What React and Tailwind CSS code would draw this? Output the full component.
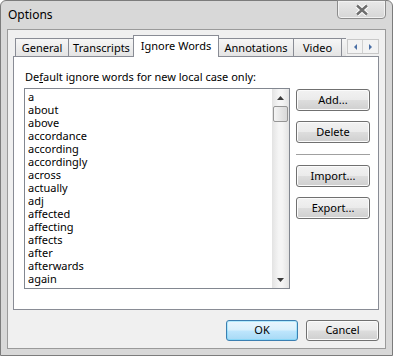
import React from "react";

// Windows 7 basic look for the Options dialog
const FONT = "font-['Noto_Sans',sans-serif]";
const BTN =
  "flex items-center justify-center rounded-[3px] border border-[#707070] bg-[linear-gradient(to_bottom,#f2f2f2_0%,#ebebeb_48%,#dddddd_52%,#cfcfcf_100%)] shadow-[inset_0_0_0_1px_#fbfbfb] text-[11px] text-black";

const WORDS = [
  "a",
  "about",
  "above",
  "accordance",
  "according",
  "accordingly",
  "across",
  "actually",
  "adj",
  "affected",
  "affecting",
  "affects",
  "after",
  "afterwards",
  "again",
];

const TABS = [
  { name: "General", w: "w-[53px]" },
  { name: "Transcripts", w: "w-[66px]" },
  { name: "Ignore Words", w: "w-[86px]", active: true },
  { name: "Annotations", w: "w-[75px]" },
  { name: "Video", w: "w-[48px]" },
];

const CloseGlyph = () => (
  <svg width="14" height="12" viewBox="0 0 14 12">
    <path d="M2 1.5 L12 10.5 M12 1.5 L2 10.5" stroke="#ffffff" strokeWidth="4.5" />
    <path d="M2 1.5 L12 10.5 M12 1.5 L2 10.5" stroke="#6e6e6e" strokeWidth="2.4" />
  </svg>
);

const Tri = ({ dir, color = "#000" }) => {
  const pts = {
    up: "0,4 3.5,0 7,4",
    down: "0,0 3.5,4 7,0",
    left: "3,0 0,3 3,6",
    right: "0,0 3,3 0,6",
  }[dir];
  const size = dir === "up" || dir === "down" ? [7, 4] : [3, 6];
  return (
    <svg width={size[0]} height={size[1]} viewBox={`0 0 ${size[0]} ${size[1]}`}>
      <polygon points={pts} fill={color} />
    </svg>
  );
};

const Tab = ({ tab }) =>
  tab.active ? (
    <div
      className={`${tab.w} -mx-px h-[22px] -mb-px relative z-10 border border-b-0 border-[#898c95] bg-white flex items-start justify-center pt-[2px] text-[11px] leading-[15px]`}
    >
      {tab.name}
    </div>
  ) : (
    <div
      className={`${tab.w} h-[18px] border border-b-0 border-r-0 border-[#898c95] bg-[linear-gradient(to_bottom,#f6f6f6,#e4e4e4)] flex items-center justify-center text-[11px] leading-[15px]`}
    >
      {tab.name}
    </div>
  );

export default function App() {
  return (
    <div
      className={`${FONT} w-[393px] h-[356px] bg-[#d8d8d8] border border-[#7c7c7c] rounded-t-[6px] flex flex-col text-black`}
    >
      {/* title bar */}
      <div className="h-[28px] flex items-start justify-between">
        <span className="ml-[7px] mt-[6px] text-[12px] leading-[16px]">Options</span>
        <div className="mr-[6px] -mt-px w-[49px] h-[19px] rounded-b-[4px] border border-[#8c8c8c] bg-[linear-gradient(to_bottom,#e9e9e9,#d6d6d6)] shadow-[inset_0_0_0_1px_#f2f2f2] flex items-center justify-center">
          <CloseGlyph />
        </div>
      </div>

      {/* client area */}
      <div className="mx-[6px] h-[320px] bg-[#f0f0f0] border border-[#9a9a9a] flex flex-col px-[5px] pt-[5px]">
        {/* tab strip */}
        <div className="h-[21px] flex items-end pl-[2px]">
          {TABS.map((t) => (
            <Tab key={t.name} tab={t} />
          ))}
          <div className="w-[5px] h-[18px] border-l border-t border-[#898c95] bg-[linear-gradient(to_bottom,#f6f6f6,#e4e4e4)]" />
          <div className="ml-px mb-[2px] flex h-[15px] border border-[#c8c8c8] bg-[#f3f3f3]">
            <div className="w-[15px] flex items-center justify-center border-r border-[#d0d0d0]">
              <Tri dir="left" color="#4a6fa5" />
            </div>
            <div className="w-[15px] flex items-center justify-center">
              <Tri dir="right" color="#4a6fa5" />
            </div>
          </div>
        </div>

        {/* tab panel */}
        <div className="w-[366px] h-[254px] border border-[#898c95] bg-white flex flex-col pl-[10px] pt-[12px]">
          <div className="ml-px text-[11px] leading-[15px]">
            De<span className="underline">f</span>ault ignore words for new local case only:
          </div>
          <div className="mt-[4px] flex items-start">
            {/* list box */}
            <div className="w-[266px] h-[201px] border border-[#828790] bg-white flex">
              <div className="flex-1 pl-[3px] pt-[1px] overflow-hidden">
                {WORDS.map((w) => (
                  <div key={w} className="text-[11px] leading-[13px] h-[13px]">
                    {w}
                  </div>
                ))}
              </div>
              <div className="w-[17px] h-full flex flex-col bg-[linear-gradient(to_right,#e3e3e3,#f5f5f5_40%,#f5f5f5_60%,#e3e3e3)]">
                <div className="h-[17px] flex items-center justify-center">
                  <Tri dir="up" color="#3a3a3a" />
                </div>
                <div className="mx-px h-[16px] rounded-[2px] border border-[#959595] bg-[linear-gradient(to_right,#f4f4f4,#e6e6e6_50%,#d8d8d8)]" />
                <div className="flex-1" />
                <div className="h-[17px] flex items-center justify-center">
                  <Tri dir="down" color="#3a3a3a" />
                </div>
              </div>
            </div>

            {/* side buttons */}
            <div className="ml-[6px] mt-px w-[74px] flex flex-col">
              <div className={`${BTN} h-[22px]`}>Add...</div>
              <div className={`${BTN} h-[22px] mt-[10px]`}>Delete</div>
              <div className="h-px bg-[#a0a0a0] mt-[11px] mb-[10px]" />
              <div className={`${BTN} h-[22px]`}>Import...</div>
              <div className={`${BTN} h-[22px] mt-[10px]`}>Export...</div>
            </div>
          </div>
        </div>

        {/* dialog buttons */}
        <div className="w-[366px] mt-[10px] flex justify-end gap-[8px]">
          <div className="w-[72px] h-[21px] flex items-center justify-center rounded-[3px] border border-[#3c7fb1] bg-[linear-gradient(to_bottom,#eaf6fd_0%,#d9f0fc_48%,#bee6fd_52%,#a7d9f5_100%)] shadow-[inset_0_0_0_1px_#48d2fb55] text-[11px]">
            OK
          </div>
          <div className={`${BTN} w-[73px] h-[21px]`}>Cancel</div>
        </div>
      </div>
    </div>
  );
}
